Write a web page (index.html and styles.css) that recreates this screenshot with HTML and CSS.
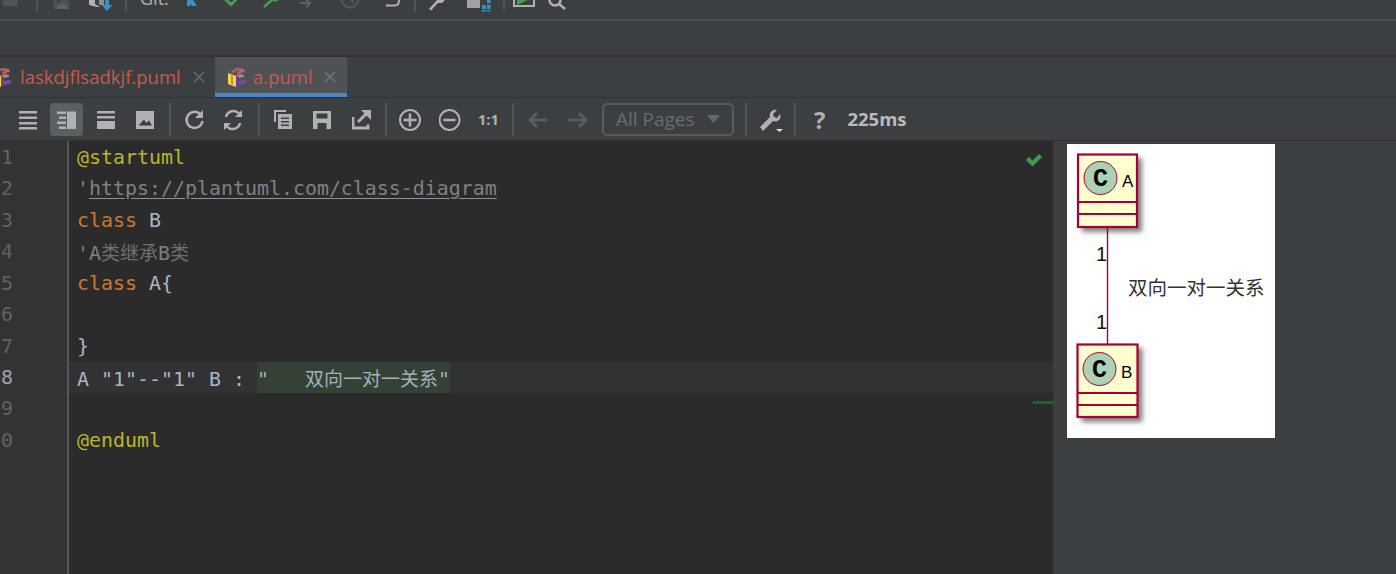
FILE: index.html
```html
<!DOCTYPE html>
<html lang="en">
<head>
<meta charset="utf-8">
<title>a.puml</title>
<link rel="stylesheet" href="styles.css">
</head>
<body>
<svg class="defs" width="0" height="0" aria-hidden="true">
  <symbol id="puml" viewBox="0 0 20 21">
    <path d="M1 6l8 3v11l-8-3z" fill="#f3d34a"/>
    <path d="M4 8l2 1v9l-2-1z" fill="#b89a35"/>
    <path d="M9 9l3-1v10l-3 2z" fill="#6d3f93"/>
    <path d="M12 14l7-1v3l-7 2z" fill="#7d4aa3"/>
    <path d="M3 5l7-4 7 1 1 3-5 1 3 2-5 2-3-2 4-1-3-2 4-1-3-1-4 3z" fill="#b9646a"/>
    <path d="M12 8l5 0 0 2-5 1z" fill="#8f8f95"/>
  </symbol>
</svg>

<header class="topbar">
  <svg class="ti" width="36" height="12" viewBox="0 0 36 12"><rect x="3" y="0" width="15" height="6" fill="#505356"/></svg>
  <span class="tsep"></span>
  <svg class="ti" width="50" height="12" viewBox="0 0 50 12"><path d="M15 0h4v4l4-4h8v9H15z" fill="#4d5052"/><path d="M21 4l6 0 4 5H17z" fill="#5c5f61"/></svg>
  <svg class="ti" width="37" height="12" viewBox="0 0 37 12"><path d="M1 0h6v4l5 3-3 0-8-2z" fill="#afb1b3"/><path d="M11 0h5v5h-5z" fill="#8c8f91"/><path d="M17 0h4v5h3.500l-5.500 6-5.500-6h3.500z" fill="#3592c4"/></svg>
  <span class="tsep"></span>
  <span class="git">Git:</span>
  <svg class="ti" width="37" height="12" viewBox="0 0 37 12"><path d="M0 0h6l4 6H5l-1-2-1 2H0z" fill="#3592c4"/></svg>
  <svg class="ti" width="39" height="12" viewBox="0 0 39 12"><path d="M0 0h4l3 2 3-2h3.500L7 6.500z" fill="#499c54"/></svg>
  <svg class="ti" width="37" height="12" viewBox="0 0 37 12"><path d="M1 7L9 0M9 0l6 0" stroke="#499c54" stroke-width="2.500" fill="none"/></svg>
  <svg class="ti" width="40" height="12" viewBox="0 0 40 12"><path d="M0 3h8M6 0l4 3.500L6 7" stroke="#5f6265" stroke-width="2" fill="none"/></svg>
  <svg class="ti" width="45" height="12" viewBox="0 0 45 12"><circle cx="10" cy="-1" r="8.500" stroke="#55585b" stroke-width="2" fill="none"/><path d="M10 -1l4 4" stroke="#55585b" stroke-width="2"/></svg>
  <svg class="ti" width="29" height="12" viewBox="0 0 29 12"><path d="M1 5.500h9c3 0 4-2 4-5.500" stroke="#afb1b3" stroke-width="2" fill="none"/></svg>
  <span class="tsep"></span>
  <svg class="ti" width="51" height="12" viewBox="0 0 51 12"><path d="M13 9l8-9h8l-3 3-4 0-7 7.500z" fill="#afb1b3"/></svg>
  <svg class="ti" width="36" height="12" viewBox="0 0 36 12"><path d="M0 0h13v8H0z" fill="#a0a2a4"/><path d="M15 5h4v4h-4zM20 5h3.500v4H20z" fill="#3592c4"/><path d="M15 10h4v1.500h-4zM20 10h3.500v1.500H20zM20 0h3.500v3.500H20z" fill="#3592c4"/></svg>
  <span class="tsep"></span>
  <svg class="ti" width="42" height="12" viewBox="0 0 42 12"><path d="M9 0v6h20V0" stroke="#afb1b3" stroke-width="2" fill="none"/><path d="M12 0h11l-11 5z" fill="#499c54"/></svg>
  <svg class="ti" width="30" height="12" viewBox="0 0 30 12"><circle cx="8" cy="0" r="5.500" stroke="#afb1b3" stroke-width="2.500" fill="none"/><path d="M12 4l6 5" stroke="#afb1b3" stroke-width="2.500"/></svg>
</header>

<div class="band"></div>

<nav class="tabs">
  <div class="tab tab-first">
    <svg class="ficon" width="20" height="21"><use href="#puml"/></svg>
    <span class="tab-name">laskdjflsadkjf.puml</span>
    <svg class="tclose" width="12" height="12" viewBox="0 0 12 12"><path d="M1 1l10 10M11 1L1 11" stroke="#686b6d" stroke-width="1.500"/></svg>
  </div>
  <div class="tab tab-active">
    <svg class="ficon" width="20" height="21"><use href="#puml"/></svg>
    <span class="tab-name">a.puml</span>
    <svg class="tclose" width="12" height="12" viewBox="0 0 12 12"><path d="M1 1l10 10M11 1L1 11" stroke="#737679" stroke-width="1.500"/></svg>
  </div>
</nav>

<div class="toolbar">
  <svg class="ic" width="50" height="33" viewBox="0 0 50 33"><path d="M19 8h18v2.500H19zM19 13.500h18V16H19zM19 19h18v2.500H19zM19 24h18v2.500H19z" fill="#afb1b3"/></svg>
  <span class="selected"><svg class="ic" width="33" height="33" viewBox="0 0 33 33"><path d="M7 8.500h9V11H7zM9 13.500h7V16H9zM7 18.500h9V21H7zM9 23.500h7V26H9z" fill="#afb1b3"/><rect x="17" y="8.500" width="9" height="17.500" fill="#afb1b3"/></svg></span>
  <svg class="ic" width="46" height="33" viewBox="0 0 46 33"><path d="M14 8h18v2.500H14zM14 13h18v2.500H14z" fill="#afb1b3"/><rect x="14" y="18" width="18" height="8" fill="#afb1b3"/></svg>
  <svg class="ic" width="40" height="33" viewBox="0 0 40 33"><path fill-rule="evenodd" d="M7 8h18v18H7zM9.500 22.500h13.500l-3-5-3 2.500-2-3.500z" fill="#afb1b3"/></svg>
  <span class="sep"></span>
  <svg class="ic" width="53" height="33" viewBox="0 0 53 33"><path d="M29 11a8 8 0 1 0 2.500 7" stroke="#afb1b3" stroke-width="2.500" fill="none"/><path d="M32 7v8h-8z" fill="#afb1b3"/></svg>
  <svg class="ic" width="34" height="33" viewBox="0 0 34 33"><path d="M2 14a7.500 7.500 0 0 1 13-3.500M16 20a7.500 7.500 0 0 1-13 3.500" stroke="#afb1b3" stroke-width="2.500" fill="none"/><path d="M18 7v7h-7zM0 27v-7h7z" fill="#afb1b3"/></svg>
  <span class="sep"></span>
  <svg class="ic" width="53" height="33" viewBox="0 0 53 33"><path d="M14 7h12v2H16v10h-2z" fill="#afb1b3"/><path fill-rule="evenodd" d="M18 11h14v15H18zM21 14.500v1.500h8v-1.500zM21 18v1.500h8V18zM21 21.500V23h8v-1.500z" fill="#afb1b3"/></svg>
  <svg class="ic" width="39" height="33" viewBox="0 0 39 33"><path fill-rule="evenodd" d="M0 8h18v18H0zM3.500 10.500v5h11v-5zM4.500 20v6h9v-6z" fill="#afb1b3"/><rect x="6.500" y="22.500" width="5" height="3.500" fill="#3c3f41"/></svg>
  <svg class="ic" width="33" height="33" viewBox="0 0 33 33"><path d="M1 14v11h15v-3.500" stroke="#afb1b3" stroke-width="2.800" fill="none"/><path d="M6 19l8-8" stroke="#afb1b3" stroke-width="3"/><path d="M9 7h10v10z" fill="#afb1b3"/></svg>
  <span class="sep"></span>
  <svg class="ic" width="52" height="33" viewBox="0 0 52 33"><circle cx="23" cy="17" r="10" stroke="#afb1b3" stroke-width="2" fill="none"/><path d="M16.500 17h13M23 10.500v13" stroke="#afb1b3" stroke-width="2.500"/></svg>
  <svg class="ic" width="40" height="33" viewBox="0 0 40 33"><circle cx="10.500" cy="17" r="10" stroke="#afb1b3" stroke-width="2" fill="none"/><path d="M4.500 17h12" stroke="#afb1b3" stroke-width="2.500"/></svg>
  <span class="one">1:1</span>
  <span class="sep"></span>
  <svg class="ic" width="53" height="33" viewBox="0 0 53 33"><path d="M33 17H16M23 10l-7 7 7 7" stroke="#5c5f61" stroke-width="2.500" fill="none"/></svg>
  <svg class="ic" width="35" height="33" viewBox="0 0 35 33"><path d="M1 17h18M12 10l7 7-7 7" stroke="#5c5f61" stroke-width="2.500" fill="none"/></svg>
  <div class="pages"><span>All Pages</span><svg width="13" height="8" viewBox="0 0 13 8"><path d="M0 0h13L6.500 8z" fill="#66696b"/></svg></div>
  <span class="sep sep-wide"></span>
  <svg class="ic" width="47" height="33" viewBox="0 0 47 33"><path d="M13 24l10-10c-1-4 2-8 7-7l-4 4 1 3 3 1 3-4c2 4-2 9-7 7L16 28z" fill="#afb1b3"/><path d="M29 26h7l-3.500 3z" fill="#dfe1e3"/></svg>
  <span class="sep"></span>
  <span class="help">?</span>
  <span class="time">225ms</span>
</div>

<main class="main">
  <section class="editor">
    <div class="gutter">
      <div class="num">1</div><div class="num">2</div><div class="num">3</div><div class="num">4</div><div class="num">5</div><div class="num">6</div><div class="num">7</div><div class="num num-cur">8</div><div class="num">9</div><div class="num">0</div>
    </div>
    <div class="code">
      <div class="line"><span class="ann">@startuml</span></div>
      <div class="line"><span class="com">'</span><span class="url">https://plantuml.com/class-diagram</span></div>
      <div class="line"><span class="kw">class</span> B</div>
      <div class="line"><span class="com">'A<span class="cjk">类继承</span>B<span class="cjk">类</span></span></div>
      <div class="line"><span class="kw">class</span> A{</div>
      <div class="line"></div>
      <div class="line">}</div>
      <div class="line line-cur">A "1"--"1" B : <span class="str">"   <span class="cjk">双向一对一关系</span>"</span></div>
      <div class="line"></div>
      <div class="line"><span class="ann">@enduml</span></div>
      <svg class="ok" width="18" height="14" viewBox="0 0 18 14"><path d="M1 7l3-3 3.500 3.500L14 1l3 3-9.500 9.500z" fill="#3f9a50"/></svg>
      <span class="stripe"></span>
    </div>
  </section>
  <aside class="preview">
    <svg class="diagram" width="208" height="294" viewBox="0 0 208 294">
      <defs><filter id="sh" x="-20%" y="-20%" width="140%" height="140%"><feGaussianBlur stdDeviation="2.500"/></filter></defs>
      <rect x="15" y="14" width="60" height="74" fill="#808080" filter="url(#sh)"/>
      <rect x="11" y="10.500" width="59" height="72.500" fill="#fefece" stroke="#a80036" stroke-width="2.200"/>
      <circle cx="33.500" cy="34" r="16.500" fill="#add1b2" stroke="#a80036" stroke-width="1"/>
      <text class="c-mark" x="33.500" y="41.500">C</text>
      <text class="c-name" x="55" y="43">A</text>
      <path d="M11 58h59M11 70h59" stroke="#a80036" stroke-width="1.800"/>
      <path d="M40.500 83v117" stroke="#a80036" stroke-width="1.400"/>
      <text class="c-num" x="29" y="117">1</text>
      <text class="c-num" x="29" y="185">1</text>
      <text class="c-label" x="61" y="151">双向一对一关系</text>
      <rect x="14.500" y="204" width="61" height="74" fill="#808080" filter="url(#sh)"/>
      <rect x="10.500" y="200.500" width="60" height="72.500" fill="#fefece" stroke="#a80036" stroke-width="2.200"/>
      <circle cx="32.500" cy="225" r="16.500" fill="#add1b2" stroke="#a80036" stroke-width="1"/>
      <text class="c-mark" x="32.500" y="232.500">C</text>
      <text class="c-name" x="54" y="234">B</text>
      <path d="M10.500 249h60M10.500 261h60" stroke="#a80036" stroke-width="1.800"/>
    </svg>
  </aside>
</main>
</body>
</html>
```
FILE: styles.css
```css
* { box-sizing: border-box; }
html, body { margin: 0; height: 100%; }
body {
  width: 1396px;
  height: 574px;
  overflow: hidden;
  background: #3c3f41;
  display: flex;
  flex-direction: column;
  font-family: "Open Sans", "Noto Sans", sans-serif;
  color: #afb1b3;
}
.defs { position: absolute; }
svg { display: block; flex: none; }

.topbar {
  height: 21px;
  flex: none;
  display: flex;
  align-items: flex-start;
  overflow: hidden;
  border-bottom: 2px solid #4d5052;
}
.tsep { width: 2px; height: 12px; background: #505355; flex: none; }
.git {
  width: 60px;
  flex: none;
  padding-left: 13px;
  margin-top: -13px;
  font-size: 18px;
  line-height: 22px;
  color: #afb1b3;
}
.band { height: 34px; flex: none; }

.tabs {
  height: 43px;
  flex: none;
  display: flex;
  border-top: 2px solid #323232;
  border-bottom: 1px solid #323232;
  overflow: hidden;
}
.tab {
  display: flex;
  align-items: center;
  height: 40px;
  flex: none;
}
.tab-first { width: 223px; margin-left: -8px; }
.tab-name { font-size: 18.500px; color: #c75a50; white-space: nowrap; margin-bottom: 2px; }
.tab-first .tab-name { padding-left: 8px; }
.tclose { margin-left: 11px; }
.tab-first .tclose { margin-left: 12px; }
.tab-active {
  width: 132px;
  background: #4e5254;
  border-bottom: 4px solid #4a88c7;
  padding: 4px 0 0 12px;
}
.tab-active .tab-name { padding-left: 6px; }

.toolbar {
  height: 43px;
  flex: none;
  display: flex;
  align-items: center;
  border-bottom: 1px solid #323232;
  font-size: 18px;
}
.selected { background: #5a5f62; border-radius: 4px; height: 33px; flex: none; }
.sep { width: 2px; height: 33px; background: #505355; flex: none; }
.sep-wide { margin-left: 11px; }
.one { width: 33px; flex: none; font-size: 14.500px; font-weight: 700; margin-left: -1px; margin-right: 1px; color: #afb1b3; }
.pages {
  width: 132px;
  height: 33px;
  flex: none;
  display: flex;
  align-items: center;
  justify-content: space-between;
  border: 2px solid #585b5d;
  border-radius: 5px;
  padding: 0 12px;
  color: #696c6e;
  font-size: 19px;
}
.help { margin-left: 18px; font-weight: 700; font-size: 24px; flex: none; }
.time { margin-left: 22px; margin-bottom: 2px; font-weight: 700; font-size: 18.500px; color: #bbbbbb; flex: none; }

.main { flex: 1; display: flex; min-height: 0; }
.editor {
  width: 1053px;
  flex: none;
  display: flex;
  background: #2b2b2b;
  font-family: "DejaVu Sans Mono", "Noto Sans CJK SC", monospace;
  font-size: 19.930px;
  color: #a9b7c6;
}
.gutter {
  width: 69px;
  flex: none;
  background: #313335;
  border-right: 2px solid #555759;
  color: #606366;
  padding-left: 1px;
  padding-top: 1px;
}
.num, .line { height: 31.430px; line-height: 31.430px; white-space: pre; }
.num-cur { color: #a4a3a3; }
.code { flex: 1; position: relative; padding-top: 1px; min-width: 0; }
.line { padding-left: 8px; }
.line-cur { background: #323232; }
.ann { color: #bbb529; }
.com { color: #808080; }
.url { color: #808080; text-decoration: underline; text-decoration-color: #8a9199; text-underline-offset: 3px; }
.kw { color: #cc7832; }
.cjk { font-family: "Noto Sans CJK SC", sans-serif; font-size: 19px; font-weight: 400; }
.com .cjk { color: #6f6f6f; }
.str { display: inline-block; height: 100%; background: #344134; color: #a0b2bb; }
.ok { position: absolute; left: 956px; top: 12px; }
.stripe { position: absolute; left: 964px; right: 0; top: 260px; height: 3px; background: #0f6b1e; }

.preview { flex: 1; padding: 3px 0 0 14px; }
.diagram { background: #ffffff; }
.c-mark { font-family: "Liberation Mono", monospace; font-weight: 700; font-size: 25px; text-anchor: middle; fill: #000000; }
.c-name { font-family: "Liberation Sans", sans-serif; font-size: 17px; fill: #000000; }
.c-num { font-family: "Liberation Sans", sans-serif; font-size: 20px; fill: #111111; }
.c-label { font-family: "Noto Sans CJK SC", sans-serif; font-size: 19.500px; fill: #333333; }
```
